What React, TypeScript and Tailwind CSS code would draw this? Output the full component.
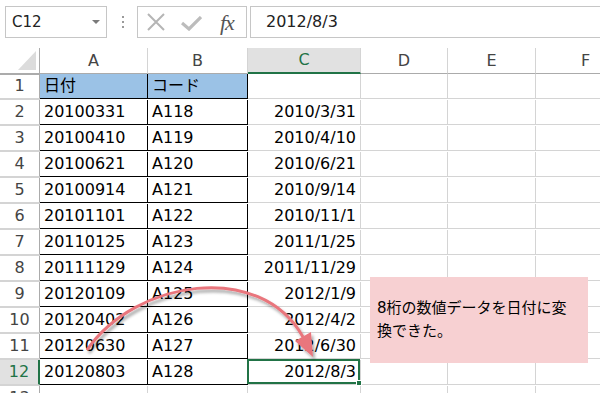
import React from "react";

const FONT = { fontFamily: '"DejaVu Sans", "Noto Sans CJK JP", sans-serif' };

const rows: [string, string, string][] = [
    ["日付", "コード", ""],
    ["20100331", "A118", "2010/3/31"],
    ["20100410", "A119", "2010/4/10"],
    ["20100621", "A120", "2010/6/21"],
    ["20100914", "A121", "2010/9/14"],
    ["20101101", "A122", "2010/11/1"],
    ["20110125", "A123", "2011/1/25"],
    ["20111129", "A124", "2011/11/29"],
    ["20120109", "A125", "2012/1/9"],
    ["20120402", "A126", "2012/4/2"],
    ["20120630", "A127", "2012/6/30"],
    ["20120803", "A128", "2012/8/3"],
];

const cols = ["A", "B", "C", "D", "E", "F"];

function FormulaBar() {
    return (
        <div className="flex items-start h-[48px] pt-[6px] pl-[5px] bg-white">
            <div className="relative flex items-center w-[102px] h-[32px] border border-[#c6c6c6] pl-[6px] text-[15px] text-[#222]">
                C12
                <svg className="absolute right-[6px] top-[13px]" width="8" height="5" viewBox="0 0 8 5">
                    <path d="M0 0 L8 0 L4 4 Z" fill="#7a7a7a" />
                </svg>
            </div>
            <div className="flex flex-col gap-[3px] ml-[15px] mt-[10px]">
                <span className="w-[2px] h-[2px] bg-[#9a9a9a]" />
                <span className="w-[2px] h-[2px] bg-[#9a9a9a]" />
                <span className="w-[2px] h-[2px] bg-[#9a9a9a]" />
            </div>
            <div className="flex items-center w-[110px] h-[32px] ml-[13px] border border-[#c6c6c6]">
                <svg className="ml-[9px]" width="18" height="18" viewBox="0 0 18 18">
                    <path d="M1 1 L17 17 M17 1 L1 17" stroke="#b5b5b5" strokeWidth="2" fill="none" />
                </svg>
                <svg className="ml-[16px] mt-[3px]" width="21" height="15" viewBox="0 0 21 15">
                    <path d="M1 7 L8 13 L20 1" stroke="#bcbcbc" strokeWidth="3.2" fill="none" />
                </svg>
                <span
                    className="ml-[18px] mt-[1px] text-[22px] italic text-[#555] leading-none tracking-[-1px]"
                    style={{ fontFamily: '"Liberation Serif", serif' }}
                >
                    fx
                </span>
            </div>
            <div className="flex-1 flex items-center h-[32px] ml-[3px] border border-r-0 border-[#c6c6c6] pl-[15px] text-[16px] text-[#222]">
                2012/8/3
            </div>
        </div>
    );
}

function ColHeader() {
    return (
        <div className="grid grid-cols-[40px_108px_100px_113px_87px_88px_100px] h-[26px]">
            <div className="relative border-r border-b border-[#ababab]">
                <svg className="absolute left-[18px] top-[3px]" width="18" height="19" viewBox="0 0 18 19">
                    <path d="M18 0 L18 19 L0 19 Z" fill="#dcdcdc" />
                </svg>
            </div>
            {cols.map((c) =>
                c === "C" ? (
                    <div key={c} className="flex items-center justify-center bg-[#e1e1e1] border-r border-[#d4d4d4] border-b-2 border-b-[#217346] text-[16px] text-[#217346]">
                        {c}
                    </div>
                ) : (
                    <div key={c} className="flex items-center justify-center border-r border-[#d4d4d4] border-b border-b-[#ababab] text-[16px] text-[#444]">
                        {c}
                    </div>
                )
            )}
            <div className="border-b border-[#ababab]" />
        </div>
    );
}

function Row({ n, data }: { n: number; data?: [string, string, string] }) {
    const selected = n === 12;
    const first = n === 1;
    return (
        <div className="grid grid-cols-[40px_108px_100px_113px_87px_88px_100px] h-[26px]">
            {selected ? (
                <div className="flex items-center justify-center bg-[#e1e1e1] border-b border-[#d4d4d4] border-r-2 border-r-[#217346] text-[16px] text-[#217346]">
                    {n}
                </div>
            ) : (
                <div className="flex items-center justify-center border-b border-[#d4d4d4] border-r border-r-[#ababab] text-[16px] text-[#444]">
                    {n}
                </div>
            )}
            {data ? (
                <>
                    <div className={`flex items-center pl-[4px] border-r border-b border-black text-[16px] text-black ${first ? "bg-[#9bc2e6]" : ""}`}>
                        {data[0]}
                    </div>
                    <div className={`flex items-center pl-[4px] border-r border-b border-black text-[16px] text-black ${first ? "bg-[#9bc2e6]" : ""}`}>
                        {data[1]}
                    </div>
                    <div className="relative flex items-center justify-end pr-[4px] border-r border-b border-[#d4d4d4] text-[16px] text-black">
                        {data[2]}
                        {selected && (
                            <div className="absolute -left-[1px] -top-[1px] right-0 bottom-0 border-2 border-[#217346]">
                                <span className="absolute -right-[4px] -bottom-[4px] w-[6px] h-[6px] bg-[#217346] border border-white" />
                            </div>
                        )}
                    </div>
                </>
            ) : (
                <>
                    <div className="border-r border-b border-[#d4d4d4]" />
                    <div className="border-r border-b border-[#d4d4d4]" />
                    <div className="border-r border-b border-[#d4d4d4]" />
                </>
            )}
            <div className="border-r border-b border-[#d4d4d4]" />
            <div className="border-r border-b border-[#d4d4d4]" />
            <div className="border-r border-b border-[#d4d4d4]" />
            <div className="border-b border-[#d4d4d4]" />
        </div>
    );
}

function Arrow() {
    return (
        <svg className="absolute left-0 top-0 pointer-events-none" width="600" height="393" viewBox="0 0 600 393">
            <defs>
                <filter id="sh" x="-20%" y="-20%" width="140%" height="140%">
                    <feDropShadow dx="2" dy="3" stdDeviation="1.6" floodColor="#000" floodOpacity="0.35" />
                </filter>
            </defs>
            <g filter="url(#sh)">
                <path d="M87 350 C135 280, 260 260, 303 337" stroke="#e9767d" strokeWidth="3" fill="none" />
                <path d="M313 357 L295 341 L311 332 Z" fill="#e9767d" />
            </g>
        </svg>
    );
}

export default function App() {
    return (
        <div className="relative w-[600px] h-[393px] overflow-hidden bg-white" style={FONT}>
            <FormulaBar />
            <ColHeader />
            {rows.map((r, i) => (
                <Row key={i} n={i + 1} data={r} />
            ))}
            <Row n={13} />
            <Row n={14} />
            <div className="absolute left-[370px] top-[277px] w-[218px] h-[86px] bg-[#f7d0d2] flex items-center px-[7px] text-[15px] leading-[23px] text-black">
                8桁の数値データを日付に変換できた。
            </div>
            <Arrow />
        </div>
    );
}
